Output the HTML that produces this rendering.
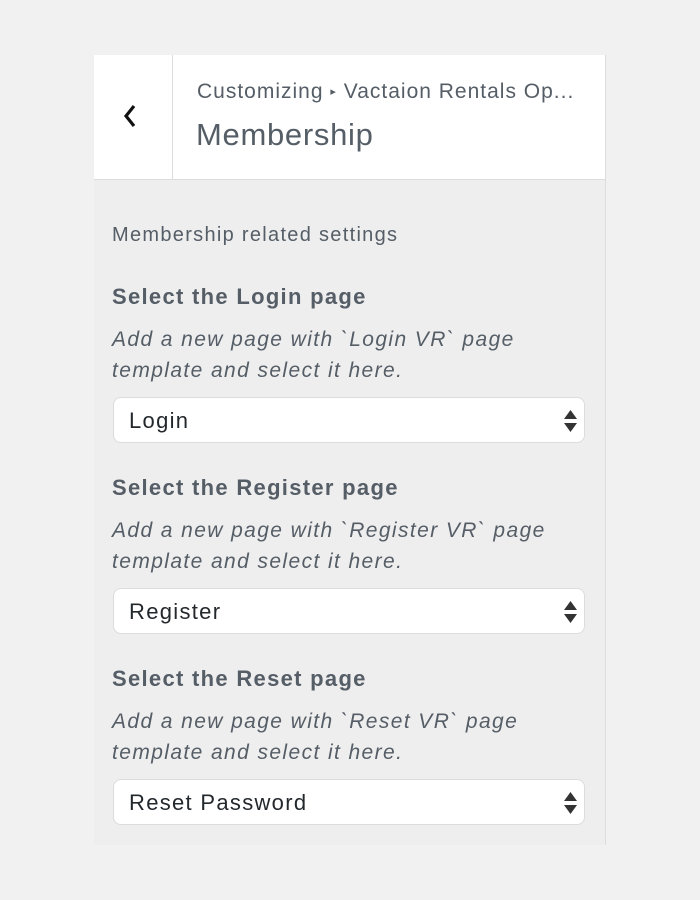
<!DOCTYPE html>
<html><head><style>
body{margin:0;width:700px;height:900px;background:#f1f1f1;font-family:"Liberation Sans",sans-serif;position:relative;overflow:hidden}
.panel{position:absolute;left:94px;top:55px;width:511px;height:790px;background:#eeeeee;border-right:1px solid #dddddd}
.head{position:absolute;left:0;top:0;width:511px;height:124px;background:#fff;border-bottom:1px solid #dcdcdc}
.back{position:absolute;left:0;top:0;width:78px;height:124px;border-right:1px solid #dcdcdc}
.t{position:absolute;white-space:nowrap;color:#555d66}
.h{font-size:22px;font-weight:bold;letter-spacing:1.3px}
.i{font-size:21px;font-style:italic;line-height:31px;letter-spacing:1.4px}
.sel{position:absolute;left:19px;width:472px;height:46px;background:#fff;border:1px solid #dcdcdc;border-radius:8px;box-sizing:border-box}
.sel span{position:absolute;left:15px;top:10px;font-size:22px;color:#23282d;letter-spacing:1.3px}
.sel svg{position:absolute;right:7px;top:12px}
</style></head><body>
<div class="panel">
 <div class="head">
  <div class="back"><svg style="position:absolute;left:28px;top:49px" width="16" height="24" viewBox="0 0 16 24"><path d="M12 2 L4 12 L12 22" fill="none" stroke="#111" stroke-width="3.2"/></svg></div>
  <div class="t" style="left:103px;top:25px;font-size:21px;letter-spacing:1px">Customizing <span style="font-size:11px;vertical-align:3px">▸</span> Vactaion Rentals Op...</div>
  <div class="t" style="left:102px;top:62px;font-size:31px;font-weight:300;letter-spacing:0.7px">Membership</div>
 </div>
 <div class="t" style="left:18px;top:169px;font-size:20px;letter-spacing:1.3px">Membership related settings</div>

 <div class="t h" style="left:18px;top:229px">Select the Login page</div>
 <div class="t i" style="left:18px;top:269px">Add a new page with `Login VR` page<br>template and select it here.</div>
 <div class="sel" style="top:342px"><span>Login</span><svg width="13" height="22"><path d="M6.5 0 L13 9 L0 9Z M0 13 L13 13 L6.5 22Z" fill="#333"/></svg></div>

 <div class="t h" style="left:18px;top:420px">Select the Register page</div>
 <div class="t i" style="left:18px;top:460px">Add a new page with `Register VR` page<br>template and select it here.</div>
 <div class="sel" style="top:533px"><span>Register</span><svg width="13" height="22"><path d="M6.5 0 L13 9 L0 9Z M0 13 L13 13 L6.5 22Z" fill="#333"/></svg></div>

 <div class="t h" style="left:18px;top:611px">Select the Reset page</div>
 <div class="t i" style="left:18px;top:651px">Add a new page with `Reset VR` page<br>template and select it here.</div>
 <div class="sel" style="top:724px"><span>Reset Password</span><svg width="13" height="22"><path d="M6.5 0 L13 9 L0 9Z M0 13 L13 13 L6.5 22Z" fill="#333"/></svg></div>
</div>
</body></html>
